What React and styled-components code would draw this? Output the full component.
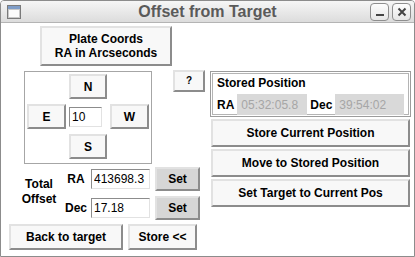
import React from 'react'
import styled, { createGlobalStyle } from 'styled-components'

const Global = createGlobalStyle`
  html, body { margin: 0; padding: 0; background: #fff; overflow: hidden; }
  * { box-sizing: border-box; }
`;

function App() {
  return (
    <>
      <Global />
      <Window>
        <TitleBar>
          <TitleSide>
            <svg width="14" height="14" viewBox="0 0 14 14">
              <rect x="0.5" y="0.5" width="13" height="13" fill="#f4f4f4" stroke="#7a7a7a" />
              <rect x="1" y="1" width="12" height="3" fill="#7f9dc8" />
              <rect x="1.5" y="4.5" width="11" height="8" fill="#fbfbfb" stroke="#c8c8c8" />
            </svg>
          </TitleSide>
          <Title>Offset from Target</Title>
          <TitleSide right>
            <WinBtn>
              <svg width="10" height="10" viewBox="0 0 10 10">
                <rect x="1" y="7" width="8" height="2" fill="#444" />
              </svg>
            </WinBtn>
            <WinBtn>
              <svg width="10" height="10" viewBox="0 0 10 10">
                <path d="M1.5 1.5 L8.5 8.5 M8.5 1.5 L1.5 8.5" stroke="#444" strokeWidth="2" />
              </svg>
            </WinBtn>
          </TitleSide>
        </TitleBar>
        <Body>
          <LeftCol>
            <PlateBtn>Plate Coords<br />RA in Arcseconds</PlateBtn>
            <MidRow>
              <DirFrame>
                <span />
                <Btn>N</Btn>
                <span />
                <Btn>E</Btn>
                <Cell><Entry defaultValue="10" w={33} /></Cell>
                <Btn>W</Btn>
                <span />
                <Btn>S</Btn>
                <span />
              </DirFrame>
              <QBtn>?</QBtn>
            </MidRow>
            <OffsetGrid>
              <TotalLabel>Total<br />Offset</TotalLabel>
              <Tag>RA</Tag>
              <Cell><Entry defaultValue="413698.3" w={59} /></Cell>
              <SetBtn>Set</SetBtn>
              <Tag>Dec</Tag>
              <Cell><Entry defaultValue="17.18" w={59} /></Cell>
              <SetBtn>Set</SetBtn>
            </OffsetGrid>
            <BottomRow>
              <Btn w={114} h={26}>Back to target</Btn>
              <Btn w={69} h={26}>Store &lt;&lt;</Btn>
            </BottomRow>
          </LeftCol>
          <RightCol>
            <StoredFrame>
              <FrameTitle>Stored Position</FrameTitle>
              <StoredRow>
                <Tag as="span">RA</Tag>
                <ReadOnly w={70}>05:32:05.8</ReadOnly>
                <Tag as="span">Dec</Tag>
                <ReadOnly w={69}>39:54:02</ReadOnly>
              </StoredRow>
            </StoredFrame>
            <WideBtn>Store Current Position</WideBtn>
            <WideBtn>Move to Stored Position</WideBtn>
            <WideBtn>Set Target to Current Pos</WideBtn>
          </RightCol>
        </Body>
      </Window>
    </>
  )
}

const Window = styled.div`
    width: 415px;
    height: 257px;
    border: 1px solid #8c8c8c;
    border-radius: 4px 4px 0 0;
    background: #fff;
    display: flex;
    flex-direction: column;
    overflow: hidden;
    font-family: "Liberation Sans", Arial, sans-serif;
    font-size: 12px;
    color: #000;
`;

const TitleBar = styled.div`
    height: 22px;
    flex: none;
    display: flex;
    align-items: center;
    background: linear-gradient(#f6f6f6, #dcdcdc);
    border-bottom: 1px solid #b4b4b4;
`;

const TitleSide = styled.div`
    width: 50px;
    display: flex;
    align-items: center;
    justify-content: ${p => p.right ? 'flex-end' : 'flex-start'};
    gap: 3px;
    padding: ${p => p.right ? '0 3px 0 0' : '0 0 0 6px'};
`;

const Title = styled.div`
    flex: 1;
    text-align: center;
    font-size: 16px;
    font-weight: 700;
    color: #5a5a5a;
`;

const WinBtn = styled.div`
    width: 19px;
    height: 18px;
    border: 1px solid #8e8e8e;
    border-radius: 4px;
    background: linear-gradient(#fdfdfd, #e6e6e6);
    display: flex;
    align-items: center;
    justify-content: center;
`;

const Body = styled.div`
    flex: 1;
    display: flex;
    padding: 2px 0 0 8px;
`;

const LeftCol = styled.div`
    width: 198px;
    display: flex;
    flex-direction: column;
`;

const Btn = styled.div`
    width: ${p => p.w ? p.w + 'px' : 'auto'};
    height: ${p => p.h ? p.h + 'px' : 'auto'};
    background: #f8f8f8;
    border: 2px solid;
    border-color: #e2e2e2 #8c8c8c #8c8c8c #e2e2e2;
    display: flex;
    align-items: center;
    justify-content: center;
    text-align: center;
    font-weight: 700;
    font-size: 12px;
    line-height: 14px;
`;

const PlateBtn = styled(Btn)`
    width: 132px;
    height: 40px;
    margin: 1px 0 0 31px;
`;

const MidRow = styled.div`
    display: flex;
    align-items: flex-start;
    margin-top: 5px;
`;

const DirFrame = styled.div`
    margin-left: 15px;
    width: 128px;
    height: 93px;
    border: 1px solid #a6a6a6;
    padding: 2px;
    display: grid;
    grid-template-columns: 39px 38px 39px;
    grid-template-rows: 25px 25px 25px;
    gap: 5px 3px;
`;

const Cell = styled.div`
    display: flex;
    align-items: center;
`;

const Entry = styled.input`
    width: ${p => p.w}px;
    height: 20px;
    border: 1px solid;
    border-color: #8c8c8c #e2e2e2 #e2e2e2 #8c8c8c;
    background: #fff;
    padding: 0 2px;
    font-family: "Liberation Sans", Arial, sans-serif;
    font-size: 12px;
    color: #000;
    outline: none;
`;

const QBtn = styled(Btn)`
    margin: -1px 0 0 21px;
    width: 32px;
    height: 22px;
    font-size: 10px;
`;

const OffsetGrid = styled.div`
    margin-top: 3px;
    display: grid;
    grid-template-columns: 52px 26px 62px 45px;
    grid-template-rows: 24px 24px;
    column-gap: 2px;
    row-gap: 5px;
`;

const TotalLabel = styled.div`
    grid-row: 1 / 3;
    padding: 10px 0 0 8px;
    text-align: center;
    font-weight: 700;
    font-size: 12px;
    line-height: 15px;
`;

const Tag = styled.div`
    display: flex;
    align-items: center;
    justify-content: center;
    font-weight: 700;
    font-size: 12px;
`;

const SetBtn = styled(Btn)`
    background: #d6d6d6;
`;

const BottomRow = styled.div`
    margin-top: 4px;
    display: flex;
    gap: 5px;
`;

const RightCol = styled.div`
    margin: 46px 0 0 3px;
    width: 201px;
    display: flex;
    flex-direction: column;
`;

const StoredFrame = styled.div`
    height: 46px;
    border: 1px solid #9c9c9c;
    box-shadow: inset 0 0 0 1px #fff, inset 0 0 0 2px #b4b4b4;
    padding: 4px 3px 0 6px;
`;

const FrameTitle = styled.div`
    font-weight: 700;
    font-size: 12px;
    line-height: 15px;
`;

const StoredRow = styled.div`
    display: flex;
    align-items: center;
    gap: 3px;
    margin-top: 3px;
`;

const ReadOnly = styled.div`
    width: ${p => p.w}px;
    height: 21px;
    background: #d9d9d9;
    color: #a6a6a6;
    display: flex;
    align-items: center;
    padding-left: 4px;
    font-size: 12px;
`;

const WideBtn = styled(Btn)`
    margin: 2px 0 0 1px;
    width: 199px;
    height: 28px;
`;

export default App
